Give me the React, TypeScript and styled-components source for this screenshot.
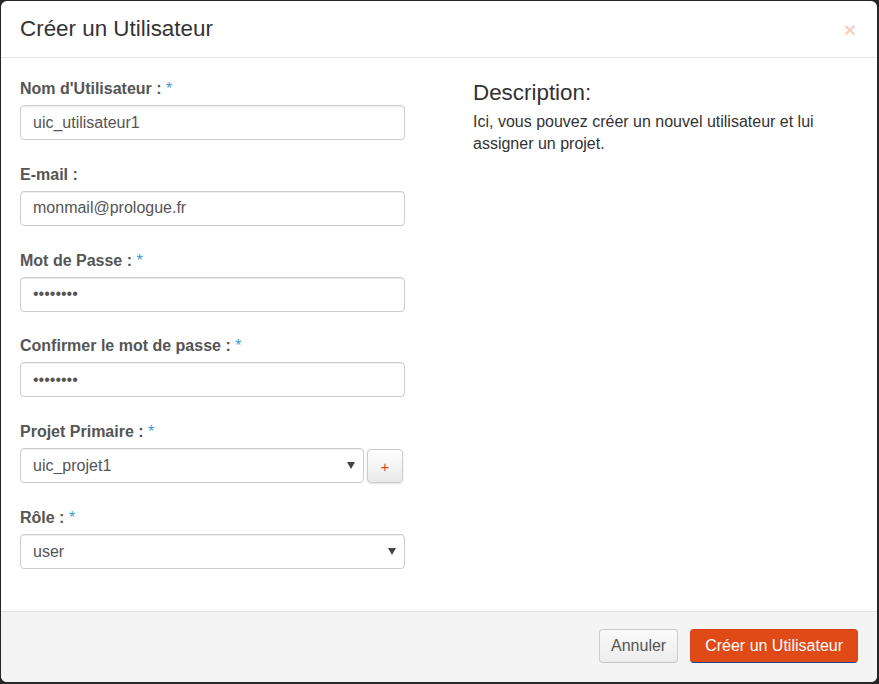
import styled, { createGlobalStyle } from 'styled-components'

const GlobalStyle = createGlobalStyle`
    html, body {
        margin: 0;
        padding: 0;
        background: #262626;
        font-family: "Liberation Sans", Arial, sans-serif;
    }
    * { box-sizing: border-box; }
`

const fields = [
    { label: "Nom d'Utilisateur :", kind: 'text', value: 'uic_utilisateur1', required: true },
    { label: 'E-mail :', kind: 'text', value: 'monmail@prologue.fr', required: false },
    { label: 'Mot de Passe :', kind: 'password', value: 'prologue', required: true },
    { label: 'Confirmer le mot de passe :', kind: 'password', value: 'prologue', required: true },
]

export default function App() {
    return (
        <>
            <GlobalStyle />
            <Modal>
                <Header>
                    <Title>Créer un Utilisateur</Title>
                    <Close type='button'>×</Close>
                </Header>
                <Body>
                    <FormColumn>
                        {fields.map((f) => (
                            <Group key={f.label}>
                                <Label>
                                    {f.label}
                                    {f.required && <Star> *</Star>}
                                </Label>
                                <Input type={f.kind} defaultValue={f.value} readOnly />
                            </Group>
                        ))}
                        <Group>
                            <Label>Projet Primaire :<Star> *</Star></Label>
                            <InlineRow>
                                <SelectWrap $width='344px'>
                                    <Select defaultValue='uic_projet1'>
                                        <option>uic_projet1</option>
                                    </Select>
                                    <Caret />
                                </SelectWrap>
                                <AddButton type='button'>+</AddButton>
                            </InlineRow>
                        </Group>
                        <Group>
                            <Label>Rôle :<Star> *</Star></Label>
                            <SelectWrap>
                                <Select defaultValue='user'>
                                    <option>user</option>
                                </Select>
                                <Caret />
                            </SelectWrap>
                        </Group>
                    </FormColumn>
                    <Aside>
                        <AsideTitle>Description:</AsideTitle>
                        <AsideText>Ici, vous pouvez créer un nouvel utilisateur et lui assigner un projet.</AsideText>
                    </Aside>
                </Body>
                <Footer>
                    <Button type='button'>Annuler</Button>
                    <Button type='button' $primary>Créer un Utilisateur</Button>
                </Footer>
            </Modal>
        </>
    )
}

const Modal = styled.div`
    margin: 1px 0 0 1px;
    width: 876px;
    height: 681px;
    background: #fff;
    border-radius: 6px;
    overflow: hidden;
    display: flex;
    flex-direction: column;
`

const Header = styled.div`
    height: 57px;
    padding: 16px 21px 0 19px;
    border-bottom: 1px solid #e5e5e5;
    display: flex;
    justify-content: space-between;
    align-items: flex-start;
`

const Title = styled.h4`
    margin: 0;
    font-size: 22.4px;
    line-height: 24px;
    font-weight: normal;
    color: #333;
`

const Close = styled.button`
    border: 0;
    background: none;
    padding: 0;
    margin-top: 2px;
    font-family: "Liberation Sans", Arial, sans-serif;
    font-size: 21px;
    font-weight: bold;
    line-height: 1;
    color: #e0481a;
    opacity: 0.25;
`

const Body = styled.div`
    flex: 1;
    padding: 20px 19px 0 19px;
    display: flex;
    gap: 68px;
`

const FormColumn = styled.div`
    width: 385px;
    display: flex;
    flex-direction: column;
`

const Group = styled.div`
    margin-bottom: 23.8px;
`

const Label = styled.label`
    display: block;
    margin-bottom: 5px;
    font-size: 16px;
    line-height: 22px;
    font-weight: bold;
    color: #555;
`

const Star = styled.span`
    font-weight: normal;
    color: #3d9ad6;
`

const Input = styled.input`
    display: block;
    width: 100%;
    height: 35px;
    padding: 0 12px;
    font-family: "Liberation Sans", Arial, sans-serif;
    font-size: 16px;
    color: #555;
    border: 1px solid #ccc;
    border-radius: 4px;
    box-shadow: inset 0 1px 1px rgba(0, 0, 0, 0.075);
    outline: none;
`

const InlineRow = styled.div`
    display: flex;
    gap: 3px;
    align-items: flex-start;
`

const SelectWrap = styled.div<{ $width?: string }>`
    position: relative;
    width: ${(p) => p.$width ?? '100%'};
`

const Select = styled.select`
    display: block;
    width: 100%;
    height: 35px;
    padding: 0 12px;
    appearance: none;
    background: #fff;
    font-family: "Liberation Sans", Arial, sans-serif;
    font-size: 16px;
    color: #555;
    border: 1px solid #ccc;
    border-radius: 4px;
    box-shadow: inset 0 1px 1px rgba(0, 0, 0, 0.075);
    outline: none;
`

const Caret = styled.span`
    position: absolute;
    right: 9px;
    top: 14px;
    width: 0;
    height: 0;
    border-left: 4px solid transparent;
    border-right: 4px solid transparent;
    border-top: 7px solid #444;
    pointer-events: none;
`

const AddButton = styled.button`
    width: 36px;
    height: 34px;
    margin-top: 1px;
    padding: 0;
    border: 1px solid #ccc;
    border-radius: 4px;
    background: linear-gradient(#fff, #e9e9e9);
    box-shadow: 0 1px 2px rgba(0, 0, 0, 0.12);
    color: #e0481a;
    font-family: "Liberation Sans", Arial, sans-serif;
    font-size: 15px;
    line-height: 1;
`

const Aside = styled.div`
    flex: 1;
    padding-top: 3px;
`

const AsideTitle = styled.h3`
    margin: 0 0 6px 0;
    font-size: 22.4px;
    line-height: 24px;
    font-weight: normal;
    color: #333;
`

const AsideText = styled.p`
    margin: 0;
    font-size: 16px;
    line-height: 22px;
    color: #333;
    width: 370px;
`

const Footer = styled.div`
    height: 71px;
    padding: 17px 19px 0 0;
    background: #f4f4f4;
    border-top: 1px solid #e2e2e2;
    display: flex;
    justify-content: flex-end;
    align-items: flex-start;
    gap: 12px;
`

const Button = styled.button<{ $primary?: boolean }>`
    height: 34px;
    padding: ${(p) => (p.$primary ? '0 14px' : '0 11px')};
    font-family: "Liberation Sans", Arial, sans-serif;
    font-size: 16px;
    border-radius: 4px;
    border: 1px solid ${(p) => (p.$primary ? '#d4431a' : '#ccc')};
    border-bottom-color: ${(p) => (p.$primary ? '#1d3f8a' : '#c2c2c2')};
    background: ${(p) => (p.$primary ? '#e04a17' : 'linear-gradient(#fafafa, #ececec)')};
    color: ${(p) => (p.$primary ? '#fff' : '#555')};
`
